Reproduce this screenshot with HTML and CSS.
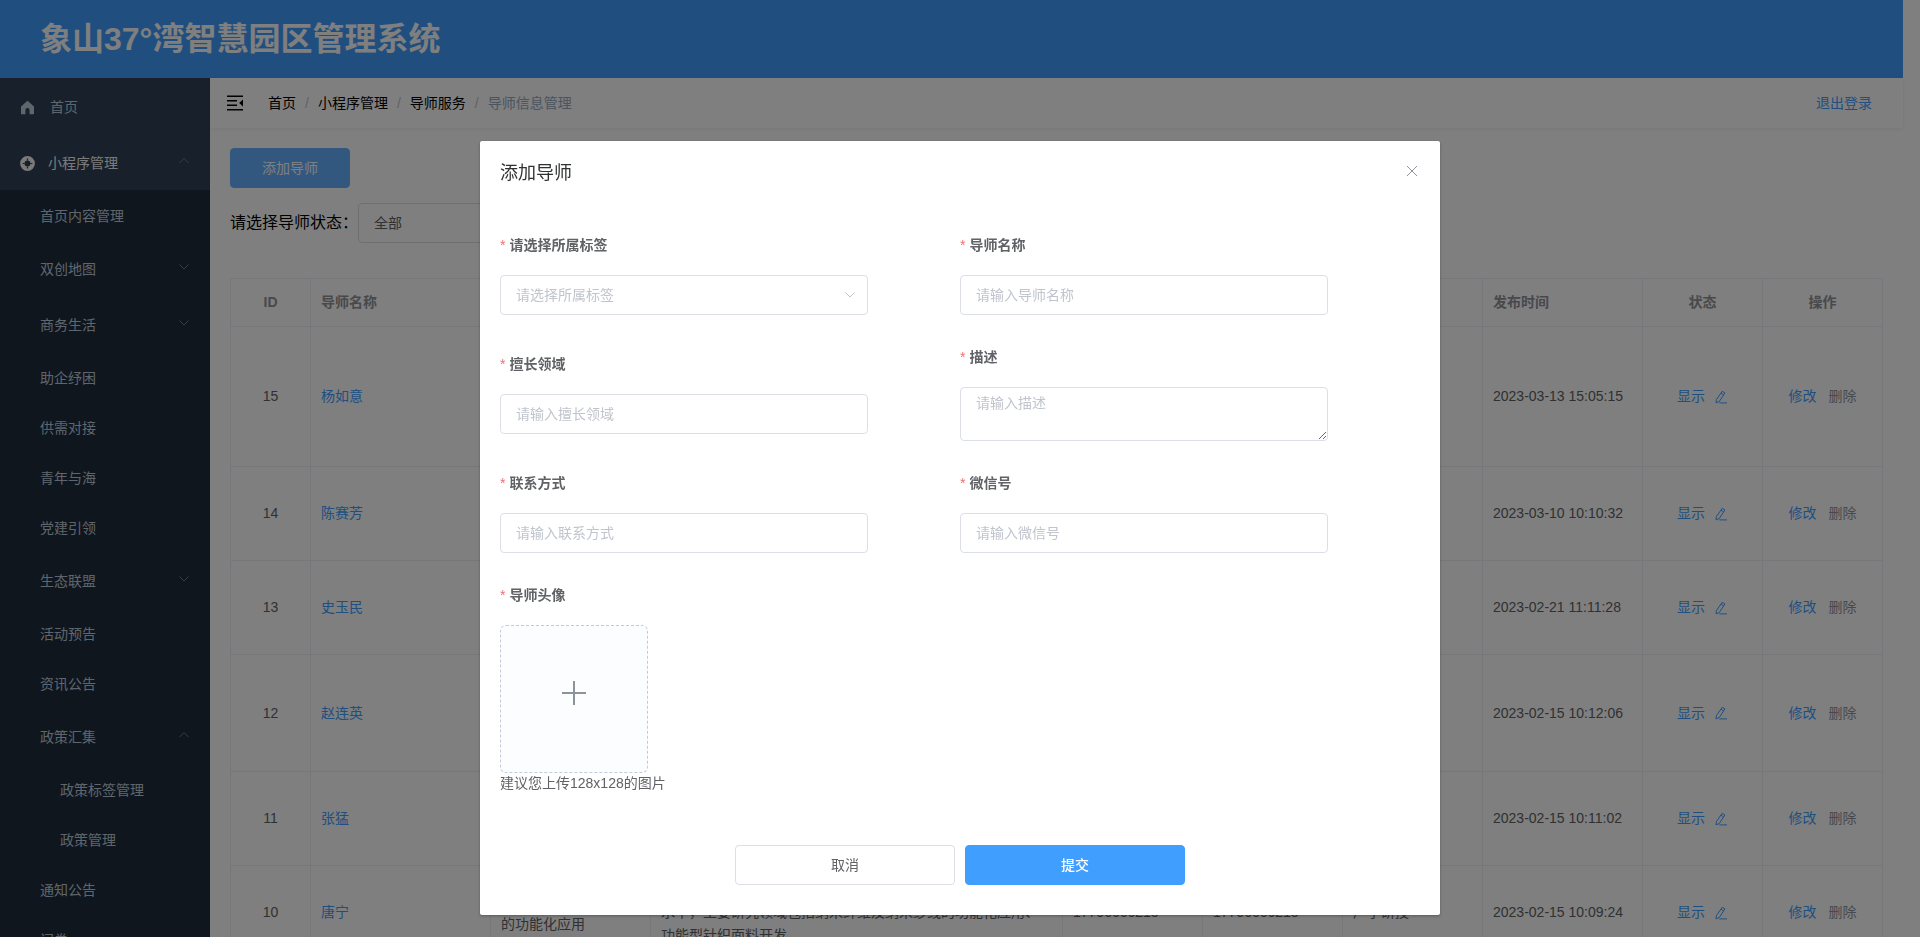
FILE: index.html
```
<!DOCTYPE html>
<html lang="zh-CN">
<head>
<meta charset="utf-8">
<title>象山37°湾智慧园区管理系统</title>
<link rel="stylesheet" href="styles.css">
</head>
<body>
<svg class="defs" aria-hidden="true">
  <symbol id="i-down" viewBox="0 0 12 12"><path d="M1.5 3.5 6 8 10.5 3.5" fill="none" stroke="currentColor"/></symbol>
  <symbol id="i-up" viewBox="0 0 12 12"><path d="M1.5 8 6 3.5 10.5 8" fill="none" stroke="currentColor"/></symbol>
  <symbol id="i-edit" viewBox="0 0 14 14"><path d="M8.2 1.3 10.9 2.9 5.2 11.6 2 12.8 2.4 9.6ZM7 3.2 9.6 4.8M5.4 12.9H13" fill="none" stroke="currentColor"/></symbol>
</svg>
<div class="page">
  <header class="topbar"><h1>象山37°湾智慧园区管理系统</h1></header>
  <div class="shell">
    <nav class="sidebar">
      <a class="item item-top" href="#">
        <svg class="item-icon" viewBox="0 0 15 15"><path d="M7.5.8 1 6.4V13.5a.8.8 0 0 0 .8.8H5.4V10.2a2.1 2.1 0 0 1 4.2 0V14.3H13.2a.8.8 0 0 0 .8-.8V6.4Z" fill="currentColor"/></svg>
        首页</a>
      <a class="item item-top item-active" href="#">
        <svg class="item-icon" viewBox="0 0 15 15"><circle cx="7.5" cy="7.5" r="5.2" fill="none" stroke="currentColor" stroke-width="4.4"/><path d="M7.5 2.6V4.6M7.5 10.4V12.4M2.6 7.5H4.6M10.4 7.5H12.4" stroke="#304156" stroke-width="1.2"/></svg>
        小程序管理<svg class="arrow"><use href="#i-up"/></svg></a>
      <div class="submenu">
        <a class="item" href="#">首页内容管理</a>
        <a class="item item-group" href="#">双创地图<svg class="arrow"><use href="#i-down"/></svg></a>
        <a class="item item-group" href="#">商务生活<svg class="arrow"><use href="#i-down"/></svg></a>
        <a class="item" href="#">助企纾困</a>
        <a class="item" href="#">供需对接</a>
        <a class="item" href="#">青年与海</a>
        <a class="item" href="#">党建引领</a>
        <a class="item item-group" href="#">生态联盟<svg class="arrow"><use href="#i-down"/></svg></a>
        <a class="item" href="#">活动预告</a>
        <a class="item" href="#">资讯公告</a>
        <a class="item item-group" href="#">政策汇集<svg class="arrow"><use href="#i-up"/></svg></a>
        <a class="item item-deep" href="#">政策标签管理</a>
        <a class="item item-deep" href="#">政策管理</a>
        <a class="item" href="#">通知公告</a>
        <a class="item" href="#">问卷</a>
      </div>
    </nav>
    <div class="content">
      <div class="navbar">
        <svg class="fold" viewBox="0 0 16 16"><path d="M0 1.2H16M0 5.7H10M0 10.3H10M0 14.8H16" stroke="currentColor" stroke-width="1.6"/><path d="M16 4.6V11.4L12.2 8Z" fill="currentColor"/></svg>
        <div class="crumbs">
          <a href="#">首页</a><span class="sep">/</span><a href="#">小程序管理</a><span class="sep">/</span><a href="#">导师服务</a><span class="sep">/</span><span class="current">导师信息管理</span>
        </div>
        <a class="link logout" href="#">退出登录</a>
      </div>
      <main class="main">
        <button class="btn btn-add" type="button">添加导师</button>
        <div class="filter">
          <label for="state">请选择导师状态：</label>
          <select id="state" class="control filter-select"><option>全部</option></select>
        </div>
        <table class="grid">
          <colgroup><col class="w80"><col class="w180"><col class="w160"><col><col class="w140"><col class="w140"><col class="w140"><col class="w160"><col class="w120"><col class="w120"></colgroup>
          <thead>
            <tr><th class="center">ID</th><th>导师名称</th><th></th><th></th><th></th><th></th><th></th><th>发布时间</th><th class="center">状态</th><th class="center">操作</th></tr>
          </thead>
          <tbody>
            <tr class="lines5"><td class="center">15</td><td><a class="link" href="#">杨如意</a></td><td></td><td></td><td></td><td></td><td></td><td>2023-03-13 15:05:15</td>
              <td><div class="state"><span>显示</span><svg><use href="#i-edit"/></svg></div></td><td><div class="ops"><a class="link" href="#">修改</a><a class="remove" href="#">删除</a></div></td></tr>
            <tr class="lines3"><td class="center">14</td><td><a class="link" href="#">陈赛芳</a></td><td></td><td></td><td></td><td></td><td></td><td>2023-03-10 10:10:32</td>
              <td><div class="state"><span>显示</span><svg><use href="#i-edit"/></svg></div></td><td><div class="ops"><a class="link" href="#">修改</a><a class="remove" href="#">删除</a></div></td></tr>
            <tr class="lines3"><td class="center">13</td><td><a class="link" href="#">史玉民</a></td><td></td><td></td><td></td><td></td><td></td><td>2023-02-21 11:11:28</td>
              <td><div class="state"><span>显示</span><svg><use href="#i-edit"/></svg></div></td><td><div class="ops"><a class="link" href="#">修改</a><a class="remove" href="#">删除</a></div></td></tr>
            <tr class="lines4"><td class="center">12</td><td><a class="link" href="#">赵连英</a></td><td></td><td></td><td></td><td></td><td></td><td>2023-02-15 10:12:06</td>
              <td><div class="state"><span>显示</span><svg><use href="#i-edit"/></svg></div></td><td><div class="ops"><a class="link" href="#">修改</a><a class="remove" href="#">删除</a></div></td></tr>
            <tr class="lines3"><td class="center">11</td><td><a class="link" href="#">张猛</a></td><td></td><td></td><td></td><td></td><td></td><td>2023-02-15 10:11:02</td>
              <td><div class="state"><span>显示</span><svg><use href="#i-edit"/></svg></div></td><td><div class="ops"><a class="link" href="#">修改</a><a class="remove" href="#">删除</a></div></td></tr>
            <tr class="lines3"><td class="center">10</td><td><a class="link" href="#">唐宁</a></td><td>纳米纤维纱线<br>的功能化应用</td><td>唐宁<br>水平，主要研究领域包括纳米纤维及纳米纱线的功能化应用、<br>功能型针织面料开发</td><td>17706666213</td><td>17706666213</td><td>产学研授</td><td>2023-02-15 10:09:24</td>
              <td><div class="state"><span>显示</span><svg><use href="#i-edit"/></svg></div></td><td><div class="ops"><a class="link" href="#">修改</a><a class="remove" href="#">删除</a></div></td></tr>
          </tbody>
        </table>
      </main>
    </div>
  </div>
</div>

<div class="overlay">
  <section class="dialog" role="dialog" aria-modal="true" aria-labelledby="dialog-title">
    <div class="dialog-head">
      <h2 id="dialog-title">添加导师</h2>
      <button class="close" type="button" aria-label="关闭"><svg viewBox="0 0 16 16"><path d="M3 3 13 13M13 3 3 13" fill="none" stroke="currentColor"/></svg></button>
    </div>
    <form class="dialog-body">
      <div class="row">
        <div class="field"><label for="tag">请选择所属标签</label>
          <div class="select-wrap"><select id="tag" class="control empty"><option>请选择所属标签</option></select><svg class="select-arrow"><use href="#i-down"/></svg></div></div>
        <div class="field"><label for="name">导师名称</label><input id="name" class="control" placeholder="请输入导师名称"></div>
      </div>
      <div class="row">
        <div class="field"><label for="area">擅长领域</label><input id="area" class="control" placeholder="请输入擅长领域"></div>
        <div class="field"><label for="desc">描述</label><textarea id="desc" class="control area" placeholder="请输入描述"></textarea></div>
      </div>
      <div class="row">
        <div class="field"><label for="phone">联系方式</label><input id="phone" class="control" placeholder="请输入联系方式"></div>
        <div class="field"><label for="wechat">微信号</label><input id="wechat" class="control" placeholder="请输入微信号"></div>
      </div>
      <div class="row">
        <div class="field"><label for="avatar">导师头像</label>
          <button id="avatar" class="upload" type="button" aria-label="上传头像"><svg viewBox="0 0 24 24"><path d="M12 0V24M0 12H24" stroke="currentColor" stroke-width="2"/></svg></button>
          <p class="hint">建议您上传128x128的图片</p></div>
      </div>
      <div class="actions">
        <button class="btn btn-cancel" type="button">取消</button>
        <button class="btn btn-submit" type="button">提交</button>
      </div>
    </form>
  </section>
</div>
</body>
</html>
```
FILE: styles.css
```
* { box-sizing: border-box; }
body {
  margin: 0;
  height: 100vh;
  overflow: hidden;
  background: #fff;
  color: #606266;
  font: 14px/20px "Liberation Sans", "Noto Sans CJK SC", sans-serif;
}
a { color: inherit; text-decoration: none; }
button, input, select, textarea { font: inherit; }
h1, h2, p { margin: 0; }
.defs { display: none; }
.link { color: #409eff; }

.page {
  display: flex;
  flex-direction: column;
  height: 100vh;
  overflow: hidden;
  padding-right: 17px;
}
.topbar {
  display: flex;
  flex: none;
  align-items: center;
  height: 78px;
  padding: 0 40px;
  background: #409eff;
  color: #fff;
}
.topbar h1 { font-size: 32px; line-height: 48px; }
.shell { display: flex; flex: 1; min-height: 0; }

.sidebar {
  flex: none;
  width: 210px;
  overflow: hidden;
  background: #304156;
  color: #bfcbd9;
}
.submenu { background: #1f2d3d; }
.item {
  display: flex;
  align-items: center;
  height: 50px;
  padding: 2px 20px 0 40px;
}
.item-top { height: 56px; gap: 15px; padding-left: 20px; }
.item-active { gap: 13px; color: #f4f4f5; }
.item-group { height: 56px; }
.item-deep { padding-left: 60px; }
.item-icon { width: 15px; height: 15px; }
.arrow { width: 12px; height: 12px; margin: 0 0 4px auto; color: #737b86; }

.content { flex: 1; min-width: 0; }
.navbar {
  display: flex;
  align-items: center;
  height: 50px;
  padding: 0 31px 0 17px;
  box-shadow: 0 1px 4px rgba(0, 21, 41, .08);
}
.fold { width: 16px; height: 16px; color: #000; }
.crumbs { display: flex; margin-left: 25px; color: #303133; }
.crumbs a { color: #000; }
.crumbs .sep { margin: 0 9px; color: #c0c4cc; }
.crumbs .current { color: #97a8be; }
.logout { margin-left: auto; }

.main { padding: 20px; }
.btn {
  height: 40px;
  padding: 0 20px;
  border: 1px solid #dcdfe6;
  border-radius: 4px;
  background: #fff;
  color: #606266;
}
.btn-add { display: block; width: 120px; border-color: #66b1ff; background: #66b1ff; color: #fff; }
.filter { display: flex; align-items: center; margin: 15px 0 35px; }
.filter label { color: #000; font-size: 16px; }
.control {
  display: block;
  width: 100%;
  height: 40px;
  padding: 0 15px;
  border: 1px solid #dcdfe6;
  border-radius: 4px;
  outline: 0;
  appearance: none;
  background: #fff;
  color: #606266;
}
.filter-select { width: 220px; }

.grid {
  width: 100%;
  border: 1px solid #ebeef5;
  border-collapse: collapse;
  table-layout: fixed;
}
.grid th, .grid td {
  padding: 0 10px;
  border: 1px solid #ebeef5;
  line-height: 23px;
  text-align: left;
}
.grid th { height: 48px; color: #909399; }
.grid .center { text-align: center; }
.w80 { width: 80px; }
.w120 { width: 120px; }
.w140 { width: 140px; }
.w160 { width: 160px; }
.w180 { width: 180px; }
.lines3 { height: 94px; }
.lines4 { height: 117px; }
.lines5 { height: 140px; }
.state, .ops { display: flex; align-items: center; justify-content: center; gap: 9px; color: #409eff; }
.state svg { width: 14px; height: 14px; }
.ops { gap: 12px; }
.remove { color: #909399; }

.overlay {
  position: fixed;
  inset: 0;
  padding-top: 15vh;
  background: rgba(0, 0, 0, .5);
}
.dialog {
  width: 50%;
  margin: 0 auto;
  border-radius: 2px;
  background: #fff;
  box-shadow: 0 1px 3px rgba(0, 0, 0, .3);
}
.dialog-head {
  display: flex;
  align-items: center;
  justify-content: space-between;
  padding: 20px 20px 10px;
}
.dialog-head h2 { color: #303133; font-size: 18px; font-weight: 400; line-height: 24px; }
.close { width: 16px; height: 20px; padding: 0 0 4px; border: 0; background: none; color: #909399; }
.close svg { display: block; }
.dialog-body { padding: 30px 20px; }
.row { display: flex; align-items: center; margin-bottom: 22px; }
.field { width: 50%; padding-right: 10%; }
.field label { display: block; margin-bottom: 10px; font-weight: 700; line-height: 40px; }
.field label::before { content: "*"; margin-right: 4px; color: #f56c6c; font-weight: 400; }
.control::placeholder, .empty { color: #c0c4cc; }
.area { height: 54px; padding: 5px 15px; line-height: 21px; resize: vertical; }
.select-wrap { position: relative; }
.select-arrow { position: absolute; top: 14px; right: 12px; width: 12px; height: 12px; color: #c0c4cc; }
.upload {
  display: flex;
  align-items: center;
  justify-content: center;
  width: 148px;
  height: 148px;
  padding: 0 0 12px;
  border: 1px dashed #c0ccda;
  border-radius: 6px;
  background: #fbfdff;
  color: #8c939d;
}
.upload svg { width: 24px; height: 24px; }
.actions { display: flex; justify-content: center; gap: 10px; padding-top: 30px; }
.actions .btn { width: 220px; }
.actions .btn-submit { border-color: #409eff; background: #409eff; color: #fff; font-weight: 500; }
```
